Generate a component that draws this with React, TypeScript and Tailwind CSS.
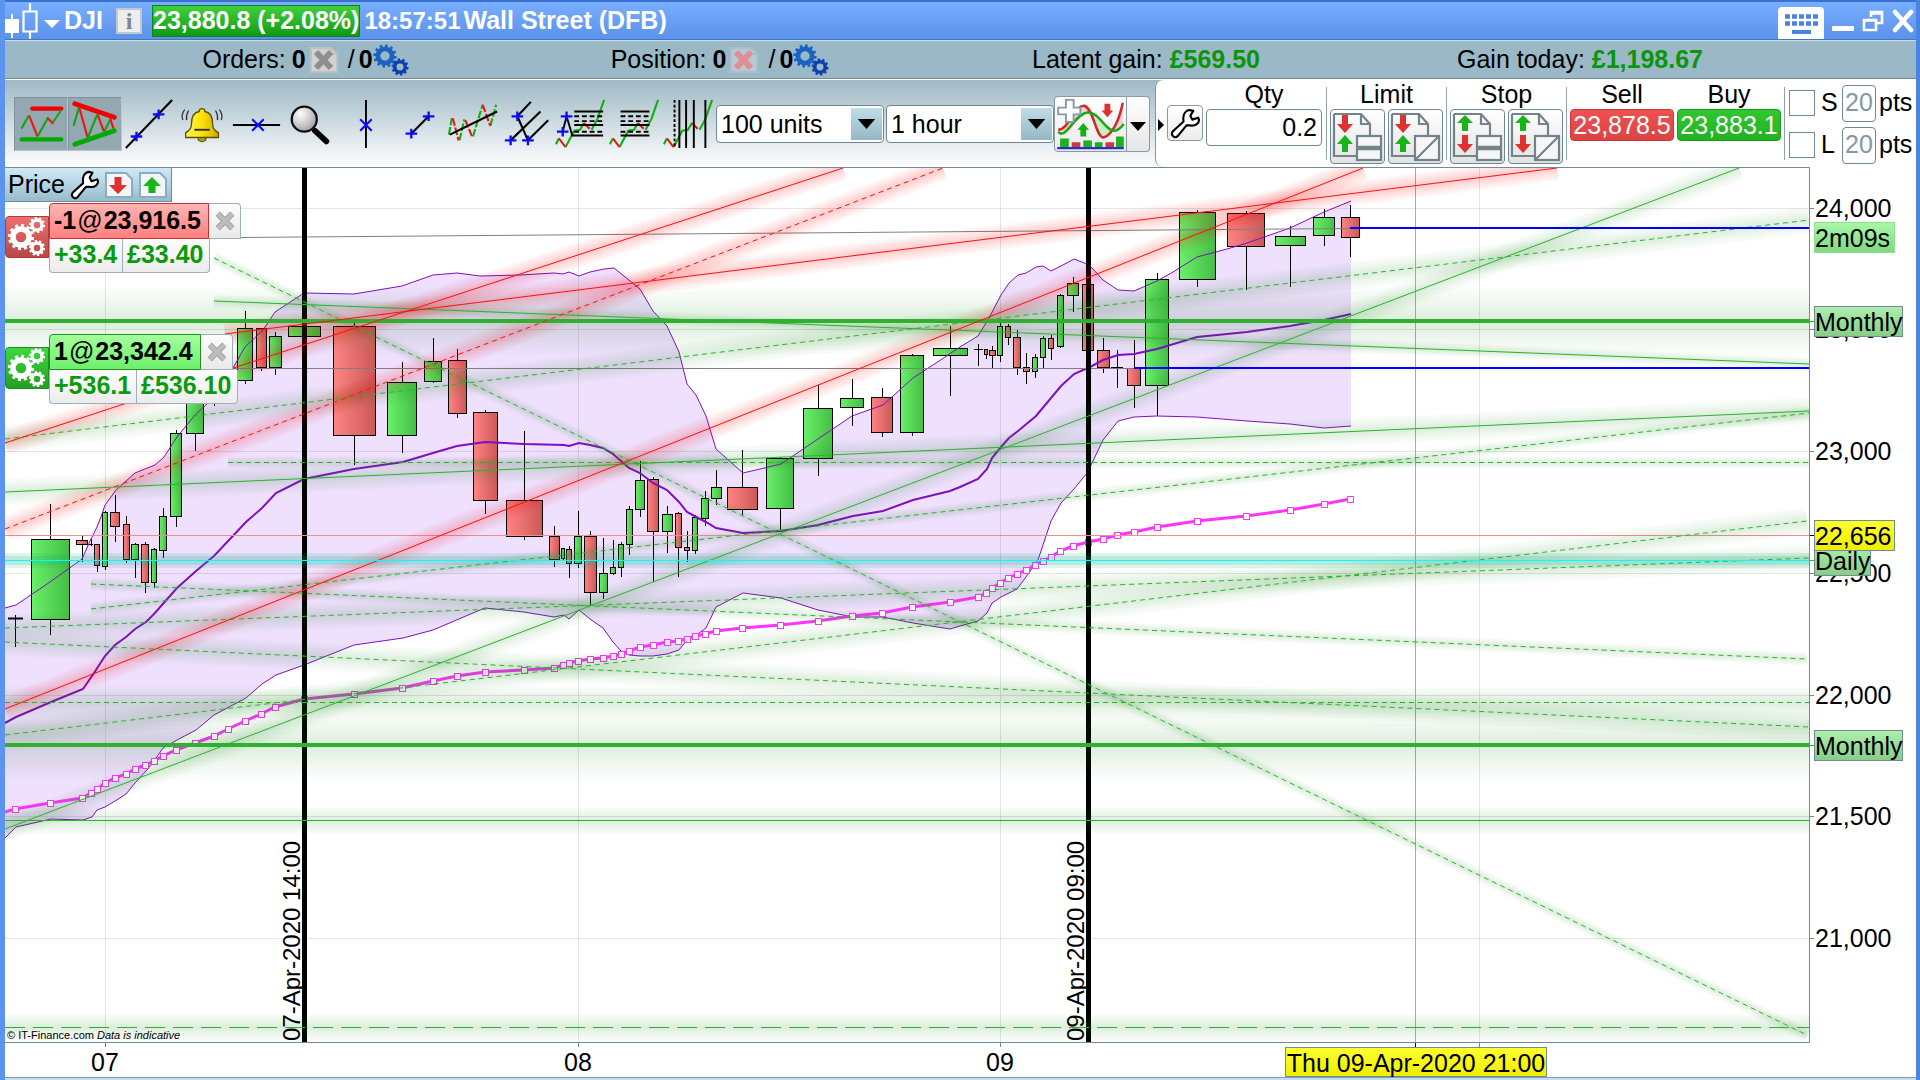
import React from "react";

type Pt = [number, number];
type Candle = [number, number, number, number, number, number, number, "g" | "r" | "d"];

const GREEN = "#2fb12f";

/* centre, left, right, body top, body bottom, high, low, kind */
const candles: Candle[] = [
  [15, 8, 23, 618, 619, 615, 647, "d"],
  [50, 31, 70, 539, 620, 504, 635, "g"],
  [82, 76, 88, 540, 545, 536, 562, "r"],
  [91, 88, 93, 544, 544, 539, 546, "d"],
  [97, 94, 100, 544, 566, 544, 572, "r"],
  [105, 102, 108, 512, 567, 511, 570, "g"],
  [115, 110, 120, 512, 527, 495, 542, "r"],
  [126, 123, 130, 524, 560, 516, 563, "r"],
  [135, 131, 139, 544, 560, 543, 578, "g"],
  [145, 141, 149, 544, 583, 542, 593, "r"],
  [154, 151, 157, 549, 583, 548, 588, "g"],
  [163, 159, 167, 516, 551, 508, 558, "g"],
  [176, 170, 182, 433, 517, 430, 527, "g"],
  [195, 186, 204, 395, 434, 385, 451, "g"],
  [214, 208, 220, 370, 396, 365, 406, "g"],
  [245, 237, 253, 328, 381, 311, 384, "g"],
  [261, 256, 267, 328, 368, 328, 371, "r"],
  [275, 269, 282, 336, 368, 332, 375, "g"],
  [304, 288, 321, 326, 337, 326, 337, "g"],
  [354, 333, 376, 326, 436, 323, 465, "r"],
  [402, 387, 417, 382, 436, 362, 453, "g"],
  [433, 424, 442, 361, 382, 338, 383, "g"],
  [457, 448, 467, 360, 414, 349, 418, "r"],
  [485, 473, 498, 412, 501, 410, 514, "r"],
  [524, 506, 543, 500, 537, 431, 540, "r"],
  [554, 549, 560, 536, 560, 526, 567, "r"],
  [563, 561, 565, 548, 559, 548, 560, "g"],
  [569, 566, 572, 549, 564, 546, 578, "r"],
  [578, 574, 582, 536, 564, 511, 568, "g"],
  [590, 584, 597, 536, 593, 531, 605, "r"],
  [603, 599, 608, 573, 593, 538, 599, "g"],
  [613, 610, 616, 567, 574, 540, 575, "g"],
  [621, 618, 624, 544, 568, 542, 577, "g"],
  [629, 626, 633, 509, 545, 506, 555, "g"],
  [640, 635, 645, 480, 510, 461, 517, "g"],
  [653, 647, 659, 479, 532, 477, 582, "r"],
  [667, 662, 673, 514, 532, 506, 553, "g"],
  [678, 675, 682, 513, 548, 512, 577, "r"],
  [687, 684, 690, 547, 551, 531, 562, "r"],
  [695, 692, 698, 517, 551, 515, 554, "g"],
  [705, 701, 709, 498, 519, 491, 526, "g"],
  [716, 711, 722, 487, 499, 470, 505, "g"],
  [742, 727, 758, 487, 510, 450, 515, "r"],
  [780, 766, 794, 458, 509, 457, 531, "g"],
  [818, 803, 833, 408, 459, 385, 476, "g"],
  [852, 840, 864, 398, 408, 379, 426, "g"],
  [882, 871, 893, 397, 433, 388, 437, "r"],
  [912, 900, 924, 355, 433, 354, 436, "g"],
  [950, 933, 968, 348, 356, 326, 396, "g"],
  [978, 974, 983, 349, 349, 344, 366, "d"],
  [986, 984, 988, 349, 355, 349, 359, "r"],
  [992, 989, 996, 350, 356, 346, 368, "r"],
  [1000, 997, 1003, 326, 356, 322, 362, "g"],
  [1008, 1005, 1011, 326, 338, 324, 345, "r"],
  [1017, 1013, 1021, 337, 368, 330, 375, "r"],
  [1026, 1023, 1030, 367, 372, 353, 384, "r"],
  [1035, 1032, 1038, 357, 372, 354, 378, "g"],
  [1043, 1040, 1046, 338, 358, 336, 368, "g"],
  [1051, 1048, 1054, 338, 349, 335, 360, "r"],
  [1060, 1057, 1064, 295, 347, 294, 348, "g"],
  [1073, 1067, 1079, 283, 296, 277, 312, "g"],
  [1088, 1082, 1094, 284, 351, 284, 351, "r"],
  [1103, 1097, 1110, 350, 368, 338, 373, "r"],
  [1117, 1111, 1123, 367, 367, 350, 388, "d"],
  [1134, 1127, 1141, 368, 386, 340, 408, "r"],
  [1157, 1145, 1169, 279, 386, 273, 416, "g"],
  [1197, 1179, 1216, 212, 280, 210, 287, "g"],
  [1246, 1227, 1265, 213, 247, 211, 290, "r"],
  [1290, 1275, 1306, 236, 246, 226, 287, "g"],
  [1324, 1313, 1335, 217, 236, 209, 246, "g"],
  [1350, 1341, 1360, 217, 238, 205, 257, "r"],
];

const upperBand: Pt[] = [
  [5, 608], [16, 605], [50, 582], [82, 559], [90, 541], [97, 527], [102, 514], [105, 505], [116, 490], [135, 473],
  [155, 465], [164, 457], [177, 437], [195, 415], [208, 403], [233, 368], [245, 347], [263, 330], [275, 312], [304, 293],
  [354, 294], [402, 286], [433, 275], [457, 273], [480, 276], [520, 275], [554, 273], [563, 274], [569, 272], [579, 276],
  [590, 272], [604, 269], [614, 268], [640, 289], [653, 311], [667, 326], [679, 352], [687, 384], [696, 395], [706, 416],
  [716, 449], [743, 473], [781, 464], [852, 416], [883, 405], [913, 378], [933, 365], [960, 347], [978, 336], [989, 318],
  [1001, 295], [1009, 283], [1018, 275], [1026, 273], [1036, 267], [1043, 266], [1051, 271], [1061, 266], [1074, 259],
  [1087, 264], [1092, 268], [1103, 280], [1118, 290], [1134, 291], [1157, 281], [1173, 272], [1197, 257], [1227, 249],
  [1247, 243], [1290, 228], [1324, 212], [1351, 201],
];

const lowerBand: Pt[] = [
  [5, 838], [16, 827], [51, 819], [83, 820], [92, 817], [97, 810], [105, 807], [115, 801], [126, 794], [135, 783],
  [146, 771], [154, 761], [163, 748], [177, 740], [196, 730], [214, 715], [246, 698], [262, 684], [276, 675], [304, 665],
  [354, 645], [403, 638], [433, 630], [480, 610], [485, 608], [524, 612], [554, 617], [564, 615], [569, 619], [579, 610],
  [590, 619], [603, 628], [613, 642], [621, 651], [629, 655], [640, 656], [653, 656], [667, 654], [679, 650], [687, 640],
  [695, 636], [706, 628], [716, 607], [743, 593], [781, 598], [818, 610], [853, 617], [883, 617], [913, 623], [950, 629],
  [960, 626], [978, 621], [987, 613], [992, 603], [1001, 597], [1017, 589], [1026, 577], [1038, 560], [1043, 545],
  [1051, 521], [1061, 503], [1074, 489], [1087, 473], [1092, 463], [1103, 440], [1118, 421], [1134, 417], [1157, 416],
  [1197, 417], [1247, 421], [1290, 424], [1324, 428], [1351, 426],
];

const midBand: Pt[] = [
  [5, 723], [16, 717], [51, 702], [83, 689], [94, 673], [105, 656], [115, 645], [126, 637], [135, 629], [146, 622],
  [154, 614], [177, 588], [196, 571], [214, 556], [246, 522], [262, 508], [276, 493], [304, 479], [354, 469], [403, 462],
  [433, 453], [457, 446], [485, 442], [524, 444], [564, 445], [569, 446], [579, 443], [590, 445], [603, 448], [613, 454],
  [629, 468], [640, 473], [653, 483], [667, 490], [679, 502], [687, 512], [700, 519], [706, 522], [716, 528], [743, 533],
  [781, 531], [818, 525], [853, 516], [883, 511], [913, 500], [950, 491], [960, 487], [978, 479], [987, 469], [992, 458],
  [1001, 447], [1009, 438], [1018, 431], [1036, 416], [1061, 386], [1074, 374], [1092, 366], [1103, 360], [1118, 355],
  [1134, 354], [1157, 349], [1197, 337], [1247, 332], [1290, 326], [1324, 320], [1351, 314],
];

const average: Pt[] = [
  [15, 809], [50, 803], [82, 798], [91, 793], [97, 789], [105, 783], [115, 778], [126, 774], [135, 769], [145, 765],
  [154, 761], [163, 756], [176, 750], [195, 743], [214, 736], [228, 729], [245, 721], [261, 714], [275, 707], [304, 699],
  [354, 694], [402, 688], [433, 681], [457, 676], [485, 672], [524, 670], [554, 668], [563, 665], [569, 663], [578, 661],
  [590, 659], [603, 658], [613, 656], [621, 654], [629, 651], [640, 647], [653, 645], [667, 642], [678, 641], [687, 639],
  [695, 636], [705, 634], [716, 631], [742, 628], [780, 625], [818, 621], [852, 616], [882, 613], [912, 607], [950, 602],
  [978, 597], [986, 593], [992, 588], [1000, 583], [1008, 578], [1017, 574], [1026, 570], [1035, 565], [1043, 561],
  [1051, 557], [1060, 551], [1073, 546], [1088, 542], [1103, 539], [1117, 535], [1134, 532], [1157, 527], [1197, 521],
  [1246, 516], [1290, 510], [1324, 504], [1350, 499],
];

interface Trend {
  from: Pt;
  to: Pt;
  color: string;
  glow: number;
  width?: number;
  dash?: string;
}

const SHORT = "5 4";

const trends: Trend[] = [
  { from: [5, 321], to: [1809, 321], color: GREEN, glow: 33, width: 4 },
  { from: [5, 745], to: [1809, 745], color: GREEN, glow: 34, width: 4 },
  { from: [5, 820.5], to: [1809, 820.5], color: GREEN, glow: 14 },
  { from: [5, 1027.5], to: [1809, 1027.5], color: GREEN, glow: 14, dash: "20 8" },
  { from: [5, 702.5], to: [1809, 702.5], color: GREEN, glow: 16, dash: SHORT },
  { from: [228, 462.5], to: [1809, 462.5], color: GREEN, glow: 6, dash: SHORT },
  { from: [214, 258], to: [1807, 1035], color: GREEN, glow: 7, dash: SHORT },
  { from: [214, 301], to: [1809, 364], color: GREEN, glow: 7 },
  { from: [5, 439], to: [1809, 220], color: GREEN, glow: 14, dash: SHORT },
  { from: [5, 492], to: [1809, 411], color: GREEN, glow: 14 },
  { from: [5, 829], to: [1739, 168], color: GREEN, glow: 13 },
  { from: [91, 609], to: [1809, 413], color: GREEN, glow: 7, dash: SHORT },
  { from: [91, 584], to: [1807, 659], color: GREEN, glow: 7, dash: SHORT },
  { from: [5, 628], to: [1809, 558], color: GREEN, glow: 14, dash: SHORT },
  { from: [5, 642], to: [1809, 727], color: GREEN, glow: 14, dash: SHORT },
  { from: [5, 735], to: [1807, 521], color: GREEN, glow: 14, dash: SHORT },
  { from: [5, 443], to: [843, 168], color: "#ff1010", glow: 13 },
  { from: [5, 529], to: [943, 168], color: "#ff1010", glow: 13, dash: SHORT },
  { from: [225, 334], to: [1557, 168], color: "#ff1010", glow: 13 },
  { from: [5, 709], to: [1363, 168], color: "#ff1010", glow: 13 },
];

const GLOW_STEPS = [1, 2, 3, 4, 5, 6, 7, 8];

const join = (pts: Pt[]) => pts.map((p) => p.join(",")).join(" ");

function Gear({ cx, cy, r, color, teeth = 10 }: { cx: number; cy: number; r: number; color: string; teeth?: number }) {
  return (
    <g fill="none" stroke={color}>
      <circle cx={cx} cy={cy} r={r * 0.62} strokeWidth={r * 0.42} />
      <circle cx={cx} cy={cy} r={r * 0.88} strokeWidth={r * 0.26} pathLength={teeth * 2} strokeDasharray="1 1" />
    </g>
  );
}

function Wrench({ className }: { className: string }) {
  return (
    <svg viewBox="0 0 32 32" className={className} aria-hidden="true">
      <path
        d="M20 2 L24 3 L21 8 L23 12 L29 10 L30 12 C30 16 26 19 21 18 L17 18 L8 29 C5 32 0 28 3 24 L14 14 C13 8 15 3 20 2 Z"
        fill="#fff"
        stroke="#000"
        strokeWidth="2.2"
        strokeLinejoin="round"
      />
    </svg>
  );
}

function BlueGears() {
  return (
    <svg viewBox="0 0 36 32" className="h-8 w-9" aria-hidden="true">
      <Gear cx={12} cy={12} r={11.5} color="#1b62c4" teeth={12} />
      <Gear cx={27} cy={23} r={8.5} color="#0e3fae" teeth={10} />
    </svg>
  );
}

function CancelDoc({ fill, edge, cross }: { fill: string; edge: string; cross: string }) {
  return (
    <svg viewBox="0 0 28 26" className="h-[26px] w-7" aria-hidden="true">
      <path d="M1 1 H21 L27 7 V25 H1 Z" fill={fill} stroke={edge} strokeWidth="2" />
      <path d="M21 1V7H27" fill="none" stroke={edge} strokeWidth="1.5" />
      <path d="M6 5 L21 21 M21 5 L6 21" stroke={cross} strokeWidth="6" />
    </svg>
  );
}

function Plus({ x, y }: { x: number; y: number }) {
  return <path d={`M${x - 6} ${y}h12M${x} ${y - 5}v10`} stroke="#0a0aff" strokeWidth="2.4" />;
}

function Wave() {
  return (
    <g fill="none" strokeWidth="2.2">
      <path d="M1 48 L4 42 M11 51 L20 34 L26 33 L30 26 M38 33 L44 22 L51 2" stroke="#11b011" />
      <path d="M4 42 L11 51 M30 26 L36 32" stroke="#ee1515" />
    </g>
  );
}

interface Tool {
  name: string;
  pressed?: boolean;
  art: React.ReactNode;
}

const tools: Tool[] = [
  {
    name: "Support and resistance",
    pressed: true,
    art: (
      <g fill="none" strokeLinecap="round">
        <path d="M18 11H48" stroke="#f00000" strokeWidth="4.5" />
        <path d="M7 43H48" stroke="#00aa00" strokeWidth="4.5" />
        <path d="M7 31L14 19M24 39L34 21M39 26L47 14" stroke="#11a511" strokeWidth="2.2" />
        <path d="M15 19L23 39M34 21L39 26" stroke="#ee1515" strokeWidth="2.2" />
      </g>
    ),
  },
  {
    name: "Chart patterns",
    pressed: true,
    art: (
      <g fill="none" strokeLinecap="round">
        <path d="M6 6L47 20" stroke="#f00000" strokeWidth="5" />
        <path d="M6 48L47 34" stroke="#00aa00" strokeWidth="5" />
        <path d="M5 28L10 11M20 40L29 18M37 34L43 22" stroke="#11a511" strokeWidth="2.2" />
        <path d="M11 11L19 40M30 18L36 34M43 22L46 31" stroke="#ee1515" strokeWidth="2.2" />
      </g>
    ),
  },
  {
    name: "Line",
    art: (
      <>
        <path d="M3 52L51 2" stroke="#000" strokeWidth="2.2" />
        <Plus x={14} y={40} />
        <Plus x={37} y={17} />
      </>
    ),
  },
  {
    name: "Alert",
    art: (
      <g fill="none">
        <path d="M22 41h8v3q-4 3-8 0z" fill="#b8a000" stroke="#4a4a00" />
        <path
          d="M26 11c3 0 3 2 3 3 6 1 8 7 8 13 0 5 2 7 6 9v5H9v-5c4-2 6-4 6-9 0-6 2-12 8-13 0-1 0-3 3-3z"
          fill="url(#bell)"
          stroke="#5a5200"
          strokeWidth="1.4"
        />
        <path d="M18 33h16" stroke="#333" strokeWidth="2" />
        <path d="M12 13q-3 5-2 10M8 12q-4 5-2 11M40 13q3 5 2 10M44 12q4 5 2 11" stroke="#333" strokeWidth="1.3" />
      </g>
    ),
  },
  {
    name: "Horizontal line",
    art: (
      <>
        <path d="M2 28H51" stroke="#000" strokeWidth="2" />
        <path d="M22 22L34 34M34 22L22 34" stroke="#0a0aff" strokeWidth="2.2" />
      </>
    ),
  },
  {
    name: "Zoom",
    art: (
      <>
        <path d="M31 34L43 45" stroke="#000" strokeWidth="6" strokeLinecap="round" />
        <circle cx="20" cy="22" r="13" fill="url(#lens)" stroke="#111" strokeWidth="2.4" />
      </>
    ),
  },
  {
    name: "Vertical line",
    art: (
      <>
        <path d="M28 2V52" stroke="#000" strokeWidth="2" />
        <path d="M22 22L34 34M34 22L22 34" stroke="#0a0aff" strokeWidth="2.2" />
      </>
    ),
  },
  {
    name: "Segment",
    art: (
      <>
        <path d="M19 37L37 19" stroke="#000" strokeWidth="2.2" />
        <Plus x={19} y={37} />
        <Plus x={37} y={19} />
      </>
    ),
  },
  {
    name: "Linear regression",
    art: (
      <g fill="none" strokeWidth="2.2">
        <path d="M2 38L5 21M13 44L18 22M27 40L37 7M45 29L51 7" stroke="#11b011" strokeDasharray="8 2" />
        <path d="M6 21L12 44M19 23L26 40M37 7L45 29" stroke="#ee1515" strokeDasharray="8 2" />
        <path d="M3 38L52 14" stroke="#000" />
      </g>
    ),
  },
  {
    name: "Pitchfork",
    art: (
      <>
        <path d="M17 19L31 4M10 44L41 14M28 44L49 23M17 19L28 44" stroke="#000" strokeWidth="2.2" />
        <Plus x={17} y={19} />
        <Plus x={10} y={44} />
        <Plus x={28} y={44} />
      </>
    ),
  },
  {
    name: "Fibonacci extension",
    art: (
      <>
        <Wave />
        <path d="M20 14H50M20 28H50M8 35L12 19L18 39H50" stroke="#000" strokeWidth="2" fill="none" />
        <path d="M20 19H50M20 24H50M20 35H50" stroke="#000" strokeWidth="2" strokeDasharray="5 3" />
        <Plus x={12} y={19} />
        <Plus x={8} y={35} />
      </>
    ),
  },
  {
    name: "Fibonacci retracement",
    art: (
      <>
        <Wave />
        <path d="M12 14H42M12 28H42M12 39H42" stroke="#000" strokeWidth="2" />
        <path d="M12 19H42M12 24H42M12 35H42" stroke="#000" strokeWidth="2" strokeDasharray="5 3" />
      </>
    ),
  },
  {
    name: "Fibonacci time zones",
    art: (
      <>
        <Wave />
        <path d="M17 2V52M24 2V52M32 2V52M44 2V52" stroke="#000" strokeWidth="2" />
        <path d="M12 2V52" stroke="#000" strokeWidth="2" strokeDasharray="3 2" />
      </>
    ),
  },
];

function OrderButton({ label, stop, split }: { label: string; stop?: boolean; split?: boolean }) {
  const first = stop ? "#18b418" : "#e03030";
  const second = stop ? "#e03030" : "#18b418";
  return (
    <button
      aria-label={label}
      className="h-[55px] w-[55px] rounded border border-[#6e8894] bg-linear-to-b from-white to-[#e2e2e2]"
    >
      <svg viewBox="0 0 53 53" className="size-full" aria-hidden="true">
        <path d="M3 4H30L39 14V25M26 46H3V4" fill="none" stroke="#72838b" strokeWidth="2.2" />
        <path d="M30 4V14H39" fill="none" stroke="#72838b" strokeWidth="2.2" />
        {stop ? (
          <>
            <path d="M14 5l8 8h-5v8h-6v-8H6z" fill={first} />
            <path d="M14 43l8-9h-5v-9h-6v9H6z" fill={second} />
          </>
        ) : (
          <>
            <path d="M14 23l8-9h-5V5h-6v9H6z" fill={first} />
            <path d="M14 25l8 9h-5v8h-6v-8H6z" fill={second} />
          </>
        )}
        <rect x="26" y="26" width="24" height="24" fill="#f6f6f6" stroke="#72838b" strokeWidth="2.2" />
        {split ? <path d="M26 50L50 26" stroke="#72838b" strokeWidth="2.2" /> : <path d="M26 38H50" stroke="#72838b" strokeWidth="4.5" />}
      </svg>
    </button>
  );
}

function PeriodSelect({ label, options }: { label: string; options: string[] }) {
  return (
    <div className="relative h-[38px] w-[168px]">
      <select
        aria-label={label}
        className="size-full appearance-none rounded border border-[#6e8894] bg-white pl-1 text-[25px] leading-8 text-black"
      >
        {options.map((o) => (
          <option key={o}>{o}</option>
        ))}
      </select>
      <svg
        viewBox="0 0 32 32"
        preserveAspectRatio="none"
        className="pointer-events-none absolute top-[3px] right-[2px] h-8 w-[31px] bg-linear-to-b from-[#bfdde9] to-[#97b7c6]"
        aria-hidden="true"
      >
        <path d="M7 11H25L16 21Z" fill="#000" />
      </svg>
    </div>
  );
}

interface PositionProps {
  tone: "short" | "long";
  size: string;
  price: string;
  points: string;
  money: string;
}

function PositionTag({ tone, size, price, points, money }: PositionProps) {
  const short = tone === "short";
  return (
    <div className="flex items-start font-bold text-[25px] leading-[33px]">
      <button
        aria-label="Position settings"
        className={
          "mt-[13px] h-[42px] w-11 rounded-l border " +
          (short
            ? "border-[#b03a3a] bg-linear-to-b from-[#ee7070] to-[#b84848]"
            : "border-[#1f8f1f] bg-linear-to-b from-[#3fd83f] to-[#22a022]")
        }
      >
        <svg viewBox="0 0 42 40" className="size-full" aria-hidden="true">
          <Gear cx={15} cy={20} r={13} color="#fff" teeth={12} />
          <Gear cx={31} cy={8} r={8} color="#fff" teeth={10} />
          <Gear cx={31} cy={31} r={8} color="#fff" teeth={10} />
        </svg>
      </button>
      <div className="flex flex-col items-start">
        <div className="flex">
          <span
            className={
              "h-9 border px-1 " +
              (short
                ? "w-[160px] rounded-tl border-[#c23030] bg-linear-to-b from-[#ffb4b4] to-[#ff8080]"
                : "w-[152px] rounded-tl border-[#1f8f1f] bg-linear-to-b from-[#a4ff9c] to-[#6cf06a]")
            }
          >
            {size}
            <span className="mx-px font-normal">@</span>
            {price}
          </span>
          <button
            aria-label="Close position"
            className="flex h-9 w-8 items-center justify-center rounded-tr border border-l-0 border-[#9cb0ba] bg-linear-to-b from-[#fdfdfd] to-[#e9e9e9]"
          >
            <svg viewBox="0 0 24 24" className="size-[22px]" aria-hidden="true">
              <path d="M4 4L20 20M20 4L4 20" stroke="#a4a4a4" strokeWidth="6.5" />
              <path d="M4 4L20 20M20 4L4 20" stroke="#bdbdbd" strokeWidth="4" />
            </svg>
          </button>
        </div>
        <div className="flex h-[34px] rounded-b border border-t-0 border-[#9cb0ba] bg-linear-to-b from-[#fdfdfd] to-[#ececec] leading-[31px] text-[#0a9a0a]">
          <span className={"border-r border-[#9cb0ba] pl-1 " + (short ? "w-[73px]" : "w-[87px]")}>{points}</span>
          <span className={"pl-1 " + (short ? "w-[86px]" : "w-[100px]")}>{money}</span>
        </div>
      </div>
    </div>
  );
}

function AxisTag({ y, w, h, text, fill, stroke, base }: { y: number; w: number; h: number; text: string; fill: string; stroke: string; base: number }) {
  return (
    <g>
      <rect x={1814.5} y={y + 0.5} width={w} height={h} fill={fill} stroke={stroke} />
      <text x={1815} y={base}>
        {text}
      </text>
    </g>
  );
}

function Chart() {
  const yGrid: [number, string][] = [
    [208.5, "24,000"],
    [329.5, "23,500"],
    [451.5, "23,000"],
    [573.5, "22,500"],
    [695.5, "22,000"],
    [816.5, "21,500"],
    [938.5, "21,000"],
  ];
  return (
    <svg viewBox="5 167 1911 910" className="block h-auto w-full" fontFamily="Liberation Sans, Arial, sans-serif" fontSize={25} role="img" aria-label="Wall Street price chart">
      <defs>
        <linearGradient id="up">
          <stop offset="0" stopColor="#6af06a" />
          <stop offset="1" stopColor="#44be44" />
        </linearGradient>
        <linearGradient id="down">
          <stop offset="0" stopColor="#ff8484" />
          <stop offset="1" stopColor="#cc5858" />
        </linearGradient>
        <linearGradient id="tag" x2="0" y2="1">
          <stop offset="0" stopColor="#aeeeae" />
          <stop offset="1" stopColor="#86cc86" />
        </linearGradient>
        <linearGradient id="timer" x2="0" y2="1">
          <stop offset="0" stopColor="#a8f8a8" />
          <stop offset="1" stopColor="#80d880" />
        </linearGradient>
        <linearGradient id="cursor" x2="0" y2="1">
          <stop offset="0" stopColor="#ffff30" />
          <stop offset="1" stopColor="#eeee00" />
        </linearGradient>
        <clipPath id="plot">
          <rect x="5" y="168" width="1804" height="874" />
        </clipPath>
      </defs>
      <rect x="5" y="167" width="1911" height="910" fill="#fff" />
      <g clipPath="url(#plot)">
        <polygon points={join(upperBand) + " " + join([...lowerBand].reverse())} fill="#efe0fd" />
        <g stroke="#000" strokeOpacity="0.1">
          {yGrid.map(([y]) => (
            <path key={y} d={`M5 ${y}H1809`} />
          ))}
          {[105.5, 578.5, 1000.5, 1479.5].map((x) => (
            <path key={x} d={`M${x} 168V1042`} />
          ))}
        </g>
        {candles.map(([c, x1, x2, top, bottom, high, low, kind]) => (
          <g key={c} stroke="#000">
            <path d={`M${c + 0.5} ${high}V${low}`} />
            {kind === "d" ? (
              <path d={`M${x1} ${top + 0.5}H${x2}`} strokeWidth={bottom > top ? 2 : 1} />
            ) : (
              <rect x={x1 + 0.5} y={top + 0.5} width={x2 - x1 - 1} height={bottom - top - 1} fill={kind === "g" ? "url(#up)" : "url(#down)"} />
            )}
          </g>
        ))}
        <g fill="none" stroke="#7f0fc0">
          <polyline points={join(upperBand)} />
          <polyline points={join(lowerBand)} />
          <polyline points={join(midBand)} strokeWidth="2" />
        </g>
        <path d="M233 368.5H1134M241 237.5L1350 228.5" stroke="#808080" />
        <polyline points={"5,812 " + join(average)} fill="none" stroke="#ff33ff" strokeWidth="3" />
        {average.map(([x, y]) => (
          <rect key={x} x={x - 2.5} y={y - 2.5} width="6" height="6" fill="#fff" stroke="#ff33ff" />
        ))}
        <path d="M304.5 168V1042M1088.5 168V1042" stroke="#000" strokeWidth="5" />
        <path d="M5 535.5H1809M1415.5 168V1042" stroke="#f48c8c" />
        {trends.map((t) => (
          <g key={t.from.join() + t.to.join()} stroke={t.color}>
            {GLOW_STEPS.map((s) => (
              <path
                key={s}
                d={`M${t.from.join(" ")}L${t.to.join(" ")}`}
                strokeOpacity={t.color === GREEN ? 0.02 : 0.025}
                strokeWidth={(t.glow * 2 * s) / 8}
              />
            ))}
          </g>
        ))}
        <rect x="5" y="553" width="1804" height="15" fill="#00b080" fillOpacity="0.12" />
        <rect x="5" y="556" width="1804" height="9" fill="#00b080" fillOpacity="0.16" />
        {trends.map((t) => (
          <path
            key={t.from.join() + t.to.join()}
            d={`M${t.from.join(" ")}L${t.to.join(" ")}`}
            stroke={t.color}
            strokeWidth={t.width ?? 1}
            strokeDasharray={t.dash}
          />
        ))}
        <path d="M5 560.5H1809" stroke="#00ffff" />
        <path d="M1350 228H1809M1134 368H1809" stroke="#0000ff" strokeWidth="2" />
        <g fontSize={24}>
          <text transform="translate(300 1041) rotate(-90)">07-Apr-2020 14:00</text>
          <text transform="translate(1084 1041) rotate(-90)">09-Apr-2020 09:00</text>
        </g>
        <g fontSize={11}>
          <text x="7" y="1039">© IT-Finance.com</text>
          <text x="97" y="1039" fontStyle="italic">
            Data is indicative
          </text>
        </g>
      </g>
      <path d="M5 167.5H1809.5V1042.5H5" fill="none" stroke="#708a96" />
      <g stroke="#708a96">
        {yGrid.map(([y]) => (
          <path key={y} d={`M1810 ${y}h4`} />
        ))}
        {[105.5, 578.5, 1000.5, 1479.5].map((x) => (
          <path key={x} d={`M${x} 1043v4`} />
        ))}
        <path d="M1810 535.5h4M1415.5 1043v4" stroke="#000" />
        <path d="M1810 321.5h4M1810 560.5h4M1810 745.5h4" stroke={GREEN} />
      </g>
      {yGrid.map(([y, label]) => (
        <text key={label} x="1815" y={y + 8.5}>
          {label}
        </text>
      ))}
      <AxisTag y={222} w={80} h={30} base={247} text="2m09s" fill="url(#timer)" stroke="#8fe08f" />
      <AxisTag y={306} w={88} h={30} base={331} text="Monthly" fill="url(#tag)" stroke="#708a96" />
      <AxisTag y={730} w={88} h={30} base={755} text="Monthly" fill="url(#tag)" stroke="#708a96" />
      <AxisTag y={545} w={56} h={30} base={570} text="Daily" fill="url(#tag)" stroke="#708a96" />
      <AxisTag y={520} w={80} h={30} base={545} text="22,656" fill="url(#cursor)" stroke="#708a96" />
      <g textAnchor="middle">
        <text x="105" y="1071">07</text>
        <text x="578" y="1071">08</text>
        <text x="1000" y="1071">09</text>
        <rect x="1285.5" y="1047.5" width="261" height="29" fill="url(#cursor)" stroke="#708a96" />
        <text x="1416" y="1072">Thu 09-Apr-2020 21:00</text>
      </g>
    </svg>
  );
}

function Separator() {
  return <span className="mt-[7px] h-[73px] w-px bg-[#8ea3ae]" />;
}

function PointsRow({ id, letter }: { id: string; letter: string }) {
  return (
    <div className="flex h-[42px] items-center text-[25px]">
      <input id={id} type="checkbox" className="size-[26px] shrink-0 appearance-none border border-[#6e8894] bg-white" />
      <label htmlFor={id} className="w-[27px] pl-[6px]">
        {letter}
      </label>
      <input
        aria-label={letter + " points"}
        defaultValue="20"
        className="h-[37px] w-[34px] rounded border border-[#6e8894] bg-white text-center text-[#8398a3]"
      />
      <span className="pl-[3px]">pts</span>
    </div>
  );
}

export default function App() {
  return (
    <div className="overflow-hidden border-r-4 border-l-[5px] border-r-[#4a83e0] border-l-[#5b93ee] bg-white font-['Liberation_Sans',Arial,sans-serif] text-black">
      <header className="flex h-10 items-center border-t-2 border-b border-t-[#3a70cf] border-b-[#4575c4] bg-linear-to-b from-[#78aeff] to-[#5b92ea] text-[25px] font-bold text-white">
        <svg viewBox="0 0 56 38" className="h-[38px] w-14 shrink-0" aria-hidden="true">
          <path d="M0 17h14v14H0zM6 12h2v24H6z" fill="#fff" />
          <path d="M18.500 9.500h13v20h-13zM25 1v8M25 30v7" fill="none" stroke="#fff" strokeWidth="2.2" />
          <path d="M39 18H55L47 26Z" fill="#fff" />
        </svg>
        <span className="w-[54px] pl-[3px]">DJI</span>
        <button aria-label="Instrument information" className="ml-[1px] flex size-[26px] items-center justify-center border-2 border-[#c4c8cc] bg-[#ededed] font-['Liberation_Serif',serif] text-2xl text-[#7a8690]">
          i
        </button>
        <span className="ml-[10px] flex h-8 items-center border border-[#14801a] bg-linear-to-b from-[#3fd03f] to-[#0d9a12]">23,880.8 (+2.08%)</span>
        <span className="ml-1 text-2xl">18:57:51</span>
        <h1 className="ml-[3px]">Wall Street (DFB)</h1>
        <div className="ml-auto flex items-center pr-[2px]">
          <button aria-label="Keyboard" className="mt-[5px] mr-2">
            <svg viewBox="0 0 46 32" className="h-8 w-[46px]" aria-hidden="true">
              <rect width="46" height="34" rx="4" fill="#fff" />
              <path d="M7 9.500H40M7 16.500H40" stroke="#4d83e0" strokeWidth="4.500" strokeDasharray="5 2" />
              <path d="M14 25H33" stroke="#4d83e0" strokeWidth="4" />
            </svg>
          </button>
          <button aria-label="Minimise" className="mr-2">
            <svg viewBox="0 0 22 24" className="h-6 w-[22px]" aria-hidden="true">
              <rect x="0" y="17" width="22" height="5" rx="1" fill="#fff" />
            </svg>
          </button>
          <button aria-label="Restore" className="mr-2">
            <svg viewBox="0 0 22 24" className="h-6 w-[22px]" aria-hidden="true">
              <path d="M9 8V3H20V14H15M8 4.500H21M2 11H14V21H2ZM1 11.500H15" fill="none" stroke="#fff" strokeWidth="2.600" />
            </svg>
          </button>
          <button aria-label="Close">
            <svg viewBox="0 0 22 24" className="h-6 w-[22px]" aria-hidden="true">
              <path d="M3 3L19 21M19 3L3 21" stroke="#fff" strokeWidth="4.500" strokeLinecap="round" />
            </svg>
          </button>
        </div>
      </header>

      <section className="grid h-[39px] grid-cols-[415fr_414fr_438fr_430fr] items-center border-t border-b border-t-[#c9dde6] border-b-[#6f8b98] bg-[#9bb8c6] pr-[121px] pl-[93px] text-[25px]">
        <div className="flex items-center justify-center">
          Orders:<b className="ml-[6px]">0</b>
          <button aria-label="Cancel all orders" className="mx-1">
            <CancelDoc fill="#d2d2d2" edge="#bdc1c3" cross="#8f8f8f" />
          </button>
          <span className="ml-[6px]">/</span>
          <b className="ml-1">0</b>
          <BlueGears />
        </div>
        <div className="flex items-center justify-center">
          Position:<b className="ml-[6px]">0</b>
          <button aria-label="Close all positions" className="mx-1">
            <CancelDoc fill="#b9c9d4" edge="#a9bfcc" cross="#dc8f94" />
          </button>
          <span className="ml-[6px]">/</span>
          <b className="ml-1">0</b>
          <BlueGears />
        </div>
        <div className="text-center">
          Latent gain: <b className="text-[#0a960a]">£569.50</b>
        </div>
        <div className="text-center">
          Gain today: <b className="text-[#0a960a]">£1,198.67</b>
        </div>
      </section>

      <section className="flex h-[88px] border-t border-white bg-linear-to-b from-[#9fb9c5] to-white">
        <div className="flex items-center pl-[9px]">
          {tools.map((t) => (
            <button
              key={t.name}
              aria-label={t.name}
              className={"h-[54px] w-[54px] shrink-0 border " + (t.pressed ? "border-[#7f939e] border-r-[#b9c8cf] border-b-[#b9c8cf] bg-[#94a8b2]" : "border-transparent")}
            >
              <svg viewBox="0 0 54 54" className="size-full" aria-hidden="true">
                <defs>
                  <linearGradient id="bell">
                    <stop offset="0" stopColor="#fff66a" />
                    <stop offset="0.500" stopColor="#ffe100" />
                    <stop offset="1" stopColor="#c9a800" />
                  </linearGradient>
                  <radialGradient id="lens" cx="0.350" cy="0.300" r="0.800">
                    <stop offset="0" stopColor="#fff" />
                    <stop offset="1" stopColor="#9a9a9a" />
                  </radialGradient>
                </defs>
                {t.art}
              </svg>
            </button>
          ))}
          <PeriodSelect label="Displayed units" options={["100 units", "200 units", "500 units"]} />
          <div className="w-[2px]" />
          <PeriodSelect label="Timeframe" options={["1 hour", "4 hours", "Daily"]} />
          <button aria-label="Add indicator" className="h-14 w-[73px] rounded-l border border-[#8a9aa3] bg-linear-to-b from-white to-[#ebebeb]">
            <svg viewBox="0 0 73 56" className="size-full" aria-hidden="true">
              <path d="M3 36L3 32C14 34 20 8 30 9C36 11 38 18 40 20C32 12 26 14 22 24C18 32 12 44 3 36Z" fill="#f6cfcf" />
              <path d="M50 42C58 40 66 26 70 6V28C66 36 60 36 56 34Z" fill="#f6cfcf" />
              <path d="M36 16C44 18 50 26 56 34L50 42C44 38 40 26 36 16Z" fill="#c6f0c0" />
              <path d="M3 34C14 34 20 8 30 9C40 12 42 42 50 42C58 40 66 26 70 6" fill="none" stroke="#cf2a2a" strokeWidth="2.600" />
              <path d="M3 36C10 46 22 15 34 16C46 16 52 36 62 35C66 34 68 32 71 28" fill="none" stroke="#18a818" strokeWidth="2.600" />
              <path d="M11 3h8v8h7v7h-7v8h-8v-8H3v-7h8z" fill="#fff" stroke="#8a98a0" strokeWidth="2" />
              <path d="M29 27l6 7h-3v7h-6v-7h-3z" fill="#15b015" />
              <path d="M54 21l6-7h-3V7h-6v7h-3z" fill="#e03030" />
              <path d="M5 43h9v9H5zM29 45h9v7h-9zM41 47h8v5h-8zM63 41h8v11h-8z" fill="#18b418" />
              <path d="M17 47h9v5h-9zM52 47h9v5h-9z" fill="#cf3a3a" />
              <path d="M2 53H71" stroke="#2d2dd0" strokeWidth="2.400" />
            </svg>
          </button>
          <button aria-label="Indicator list" className="flex h-14 w-[23px] items-center justify-center rounded-r border border-l-0 border-[#8a9aa3] bg-linear-to-b from-white to-[#e6e6e6]">
            <svg viewBox="0 0 16 10" className="mt-1 h-[10px] w-4" aria-hidden="true">
              <path d="M0 1H16L8 10Z" />
            </svg>
          </button>
        </div>

        <div className="ml-[5px] flex grow rounded-l-lg border-l border-[#7e97a3] bg-white">
          <svg viewBox="0 0 6 12" className="mt-[39px] ml-[2px] h-3 w-[6px]" aria-hidden="true">
            <path d="M0 0L6 6L0 12Z" />
          </svg>
          <button aria-label="Order settings" className="mt-[25px] ml-[3px] flex h-9 w-9 items-center justify-center rounded border border-[#8a9aa3] bg-linear-to-b from-white to-[#ececec]">
            <Wrench className="size-[31px]" />
          </button>
          <div className="ml-[3px] w-[116px] text-center">
            <label htmlFor="qty" className="block h-[29px] text-[25px] leading-7">
              Qty
            </label>
            <input id="qty" defaultValue="0.2" className="h-[37px] w-full rounded border border-[#6e8894] bg-white pr-1 text-right text-[25px]" />
          </div>
          <div className="ml-1 flex">
            <Separator />
          </div>
          <div className="ml-[3px] w-[113px] text-center text-[25px] leading-7">
            <div className="h-[29px]">Limit</div>
            <div className="flex justify-between">
              <OrderButton label="Limit order" />
              <OrderButton label="Limit order with ratio" split />
            </div>
          </div>
          <div className="ml-[3px] flex">
            <Separator />
          </div>
          <div className="ml-[3px] w-[113px] text-center text-[25px] leading-7">
            <div className="h-[29px]">Stop</div>
            <div className="flex justify-between">
              <OrderButton label="Stop order" stop />
              <OrderButton label="Stop order with ratio" stop split />
            </div>
          </div>
          <div className="ml-[3px] flex">
            <Separator />
          </div>
          <div className="ml-[3px] w-26 text-center text-[25px] leading-7">
            <div className="h-[29px]">Sell</div>
            <button aria-label="Sell at 23,878.5" className="block h-8 w-full rounded border border-[#c23a3a] bg-linear-to-b from-[#f05050] to-[#dc4444] text-white">
              23,878.5
            </button>
          </div>
          <div className="ml-[3px] w-26 text-center text-[25px] leading-7">
            <div className="h-[29px]">Buy</div>
            <button aria-label="Buy at 23,883.1" className="block h-8 w-full rounded border border-[#1d9a1d] bg-linear-to-b from-[#30c830] to-[#22b022] text-white">
              23,883.1
            </button>
          </div>
          <div className="ml-[3px] flex">
            <Separator />
          </div>
          <div className="ml-1 pt-[2px]">
            <PointsRow id="stop-points" letter="S" />
            <PointsRow id="limit-points" letter="L" />
          </div>
        </div>
      </section>

      <main className="relative">
        <Chart />
        <div className="absolute top-px left-0 flex h-[34px] w-[167px] items-center border-r border-b border-[#708a96] bg-linear-to-b from-[#cfeaf8] to-[#98bccd] pl-[3px] text-[25px]">
          Price
          <button aria-label="Price settings" className="ml-[5px]">
            <Wrench className="size-[30px]" />
          </button>
          <button aria-label="Sell arrow" className="ml-1">
            <svg viewBox="0 0 30 28" className="h-7 w-[30px]" aria-hidden="true">
              <path d="M2 2H22L28 8V26H2Z" fill="#f3f6f8" stroke="#8fabc0" strokeWidth="2" />
              <path d="M14 23l9-9h-5.500V6h-7v8H5z" fill="#e03030" />
            </svg>
          </button>
          <button aria-label="Buy arrow" className="ml-1">
            <svg viewBox="0 0 30 28" className="h-7 w-[30px]" aria-hidden="true">
              <path d="M2 2H22L28 8V26H2Z" fill="#f3f6f8" stroke="#8fabc0" strokeWidth="2" />
              <path d="M14 6l9 9h-5.500v7h-7v-7H5z" fill="#18b418" />
            </svg>
          </button>
        </div>
        <div className="absolute top-9 left-0">
          <PositionTag tone="short" size="-1" price="23,916.5" points="+33.4" money="£33.40" />
        </div>
        <div className="absolute top-[167px] left-0">
          <PositionTag tone="long" size="1" price="23,342.4" points="+536.1" money="£536.10" />
        </div>
      </main>
      <footer className="h-[3px] border-t border-[#7f9fb0] bg-[#c5dfec]" />
    </div>
  );
}
